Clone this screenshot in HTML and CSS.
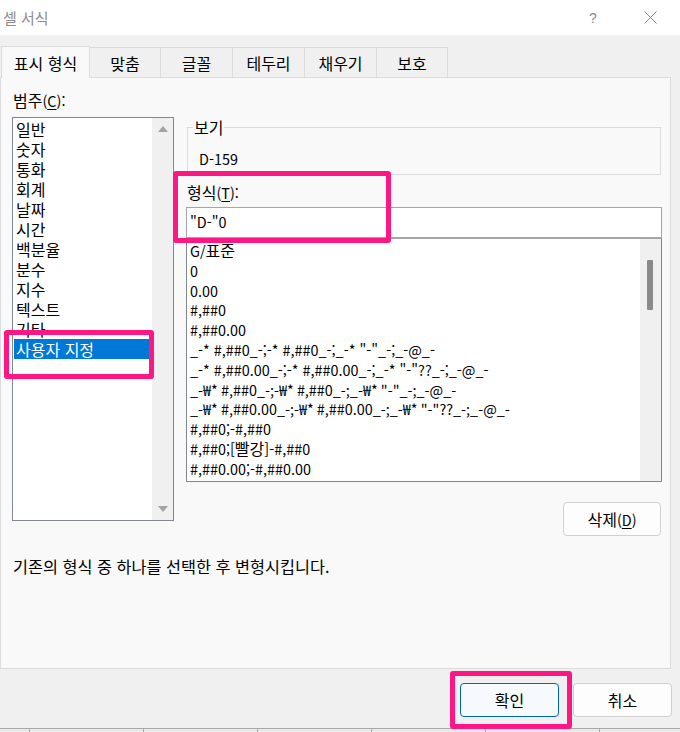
FILE: index.html
```html
<!DOCTYPE html>
<html lang="ko">
<head>
<meta charset="utf-8">
<title>셀 서식</title>
<link rel="stylesheet" href="styles.css">
</head>
<body>
<div class="dialog">
  <div class="titlebar">
    <span class="title">셀 서식</span>
    <span class="tb-help">?</span>
    <span class="tb-close">
      <svg width="13" height="13" viewBox="0 0 13 13"><path d="M0.5 0.5L12.5 12.5M12.5 0.5L0.5 12.5" stroke="#8a8a8a" stroke-width="1" fill="none"/></svg>
    </span>
  </div>

  <div class="tabs">
    <div class="tab active">표시 형식</div>
    <div class="tab">맞춤</div>
    <div class="tab">글꼴</div>
    <div class="tab">테두리</div>
    <div class="tab">채우기</div>
    <div class="tab">보호</div>
  </div>

  <div class="panel">
    <div class="columns">
      <div class="left">
        <div class="label">범주<span class="lat">(<u>C</u>):</span></div>
        <div class="listbox">
          <ul class="items">
            <li>일반</li>
            <li>숫자</li>
            <li>통화</li>
            <li>회계</li>
            <li>날짜</li>
            <li>시간</li>
            <li>백분율</li>
            <li>분수</li>
            <li>지수</li>
            <li>텍스트</li>
            <li>기타</li>
            <li class="selected">사용자 지정</li>
          </ul>
          <div class="vscroll">
            <span class="arrow up"></span>
            <span class="arrow down"></span>
          </div>
        </div>
      </div>

      <div class="right">
        <fieldset class="preview">
          <legend>보기</legend>
          <div class="sample">D-159</div>
        </fieldset>
        <div class="label fmt-label">형식<span class="lat">(<u>T</u>):</span></div>
        <div class="input">"D-"0</div>
        <div class="fmtlist">
          <ul class="fmt-items">
            <li>G/<span class="ko">표준</span></li>
            <li>0</li>
            <li>0.00</li>
            <li>#,##0</li>
            <li>#,##0.00</li>
            <li>_-* #,##0_-;-* #,##0_-;_-* "-"_-;_-@_-</li>
            <li>_-* #,##0.00_-;-* #,##0.00_-;_-* "-"??_-;_-@_-</li>
            <li>_-₩* #,##0_-;-₩* #,##0_-;_-₩* "-"_-;_-@_-</li>
            <li>_-₩* #,##0.00_-;-₩* #,##0.00_-;_-₩* "-"??_-;_-@_-</li>
            <li>#,##0;-#,##0</li>
            <li>#,##0;[<span class="ko">빨강</span>]-#,##0</li>
            <li>#,##0.00;-#,##0.00</li>
          </ul>
          <div class="fmt-scroll"><span class="thumb"></span></div>
        </div>
        <div class="delete-row">
          <button class="btn delete">삭제<span class="lat">(<u>D</u>)</span></button>
        </div>
      </div>
    </div>
    <p class="desc">기존의 형식 중 하나를 선택한 후 변형시킵니다.</p>
  </div>

  <div class="footer">
    <button class="btn ok">확인</button>
    <button class="btn cancel">취소</button>
  </div>

  <div class="sheet">
    <span></span><span></span><span></span><span></span><span></span><span></span>
  </div>

  <div class="mark mark-category"></div>
  <div class="mark mark-format"></div>
  <div class="mark mark-ok"></div>
</div>
</body>
</html>
```

FILE: styles.css
```css
* { box-sizing: border-box; }

html, body {
  margin: 0;
  padding: 0;
  background: #e6e6e6;
}

body {
  font-family: "Noto Sans CJK KR", "Noto Sans", sans-serif;
  font-size: 16px;
  color: #000;
}

.lat { font-size: 14.4px; }
.ko { font-size: 16px; }

.dialog {
  position: relative;
  width: 680px;
  height: 732px;
  background: #f0f0f0;
  display: flex;
  flex-direction: column;
  overflow: hidden;
}

/* title bar */
.titlebar {
  height: 35px;
  background: #fff;
  display: flex;
  align-items: center;
  padding-left: 3px;
  color: #8c8c8c;
  font-size: 15px;
}
.title { flex: 1; }
.tb-help {
  width: 14px;
  text-align: center;
  font-family: "Liberation Sans", sans-serif;
  font-size: 14px;
  color: #8a8a8a;
  margin-right: 44px;
}
.tb-close {
  display: flex;
  margin-right: 23px;
}

/* tabs */
.tabs {
  margin-top: 11px;
  padding-left: 1px;
  display: flex;
  align-items: flex-end;
  height: 31px;
  position: relative;
  z-index: 1;
}
.tab {
  height: 30px;
  border: 1px solid #dcdcdc;
  border-bottom: none;
  border-left: none;
  background: #f0f0f0;
  display: flex;
  align-items: center;
  justify-content: center;
  width: 71px;
}
.tab:nth-child(3), .tab:nth-child(4), .tab:nth-child(5) { width: 72px; }
.tab.active {
  width: 89px;
  height: 32px;
  margin-bottom: -1px;
  background: #f9f9f9;
  border-left: 1px solid #dcdcdc;
}

/* panel */
.panel {
  width: 671px;
  height: 592px;
  background: #f9f9f9;
  border: 1px solid #dcdcdc;
  padding: 12px 9px 0 11px;
}
.columns {
  display: grid;
  grid-template-columns: 162px 476px;
  column-gap: 12px;
}
.label {
  height: 20px;
  line-height: 20px;
  padding-left: 1px;
}
u { text-decoration-thickness: 1px; text-underline-offset: 2px; }

.listbox {
  margin-top: 7px;
  height: 404px;
  border: 1px solid #828790;
  background: #fff;
  display: flex;
}
.items {
  list-style: none;
  margin: 0;
  padding: 1px 0 0 1px;
  flex: 1;
}
.items li {
  height: 20px;
  line-height: 20px;
  padding-left: 2px;
  white-space: nowrap;
}
.items li.selected {
  background: #0078d7;
  color: #fff;
  margin-right: 2px;
}
.vscroll {
  width: 21px;
  background: #f0f0f0;
  display: flex;
  flex-direction: column;
  justify-content: space-between;
  align-items: center;
  padding: 8px 0 8px;
}
.arrow {
  width: 0;
  height: 0;
  border-left: 5px solid transparent;
  border-right: 5px solid transparent;
}
.arrow.up { border-bottom: 6px solid #a3a3a3; }
.arrow.down { border-top: 6px solid #a3a3a3; }

/* right column */
.preview {
  margin: 29px 1px 0 1px;
  padding: 0;
  border: 1px solid #dcdcdc;
  height: 56px;
}
.preview legend {
  padding: 0 1px;
  margin-left: 5px;
  line-height: 16px;
}
.sample {
  margin-top: 14px;
  padding-left: 11px;
  line-height: 20px;
  font-size: 14.4px;
}
.fmt-label {
  margin-top: 7px;
}
.input {
  margin-top: 5px;
  height: 31px;
  background: #fff;
  border: 1px solid #a5a5a5;
  padding-left: 3px;
  line-height: 28px;
  font-size: 14.4px;
}
.fmtlist {
  height: 244px;
  border: 1px solid #828790;
  border-top-color: #a5a5a5;
  background: #fff;
  display: flex;
  overflow: hidden;
}
.fmt-items {
  list-style: none;
  margin: 0;
  padding: 2px 0 0 3px;
  flex: 1;
  overflow: hidden;
  font-size: 14.4px;
}
.fmt-items li {
  height: 19.8px;
  line-height: 19.8px;
  white-space: nowrap;
}
.fmt-scroll {
  width: 21px;
  background: #f0f0f0;
  padding: 21px 0 0 7px;
}
.thumb {
  display: block;
  width: 6px;
  height: 50px;
  background: #8a8a8a;
  border-radius: 1px;
}
.delete-row {
  display: flex;
  justify-content: flex-end;
  margin-top: 20px;
  padding-right: 1px;
}

.btn {
  font: inherit;
  color: #000;
  background: #fdfdfd;
  border: 1px solid #d0d0d0;
  border-radius: 4px;
  height: 34px;
  padding: 0;
}
.delete { width: 98px; }

.desc {
  margin: 20px 0 0 1px;
  line-height: 20px;
  font-size: 16.3px;
}

/* footer buttons */
.footer {
  display: flex;
  justify-content: flex-end;
  gap: 14px;
  padding-right: 8px;
  margin-top: 14px;
}
.ok {
  width: 99px;
  background: #f6f9fd;
  border-color: #0067c0;
}
.cancel { width: 99px; }

/* sheet grid seen behind the dialog */
.sheet {
  margin-top: auto;
  height: 4px;
  border-top: 1px solid #a8a8a8;
  background: #e9e9e9;
  display: flex;
  padding-left: 29px;
}
.sheet span {
  width: 114px;
  border-left: 1px solid #a8a8a8;
  flex: none;
}

/* pink annotation marks */
.mark {
  position: absolute;
  border: 5px solid #fc1785;
  border-radius: 3px;
  pointer-events: none;
}
.mark-category { left: 4px; top: 330px; width: 150px; height: 49px; }
.mark-format { left: 173px; top: 171px; width: 218px; height: 72px; }
.mark-ok { left: 450px; top: 671px; width: 122px; height: 58px; }
```
